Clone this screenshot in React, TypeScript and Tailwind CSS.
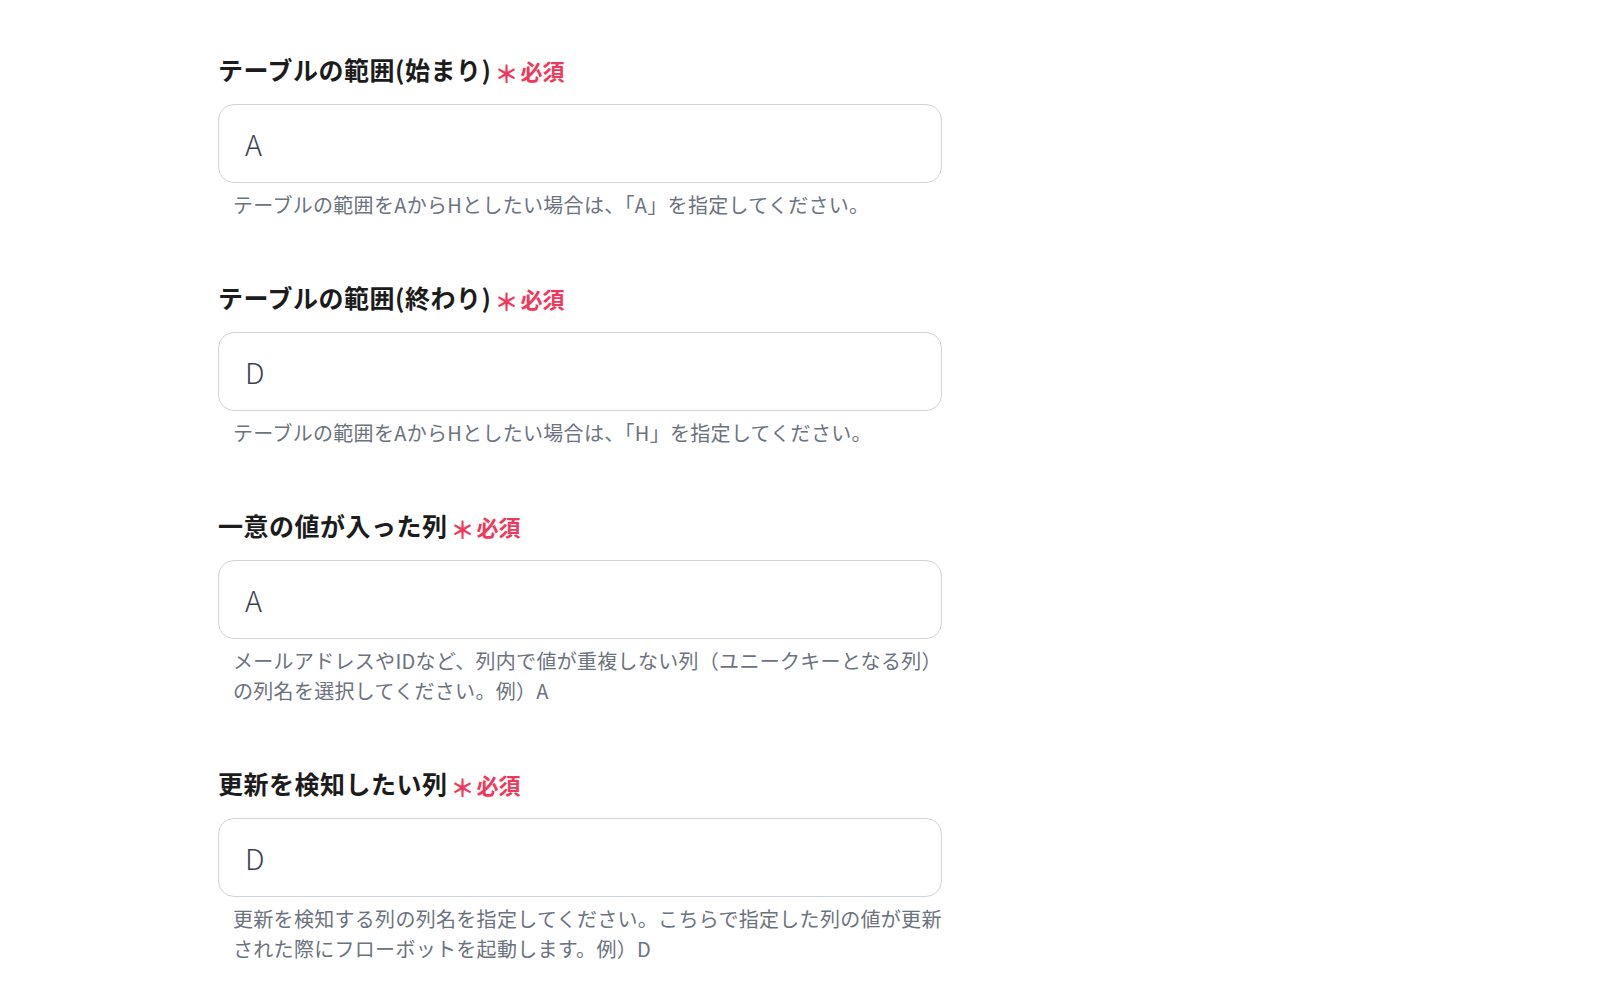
import React from "react";

const JP = { fontFamily: '"Noto Sans CJK JP", "Noto Sans", sans-serif' };

type FieldProps = { label: string; value: string; help: string };

function Field({ label, value, help }: FieldProps) {
  return (
    <div className="flex flex-col">
      <div className="flex items-center h-[36px]">
        <span className="text-[25px] font-bold text-[#1c1c1c] tracking-[0.5px] leading-[36px]">{label}</span>
        <span className="ml-[3px] mt-[8px] text-[24px] font-bold text-[#f2385a] leading-none">＊</span>
        <span className="ml-[2px] mt-[2px] text-[22px] font-bold text-[#f2385a] leading-none">必須</span>
      </div>
      <div className="mt-[17px] h-[79px] w-[724px] rounded-[16px] border border-[#cfd4da] bg-white flex items-center pl-[26px]">
        <span className="text-[29px] font-light text-[#3b4350] leading-none">{value}</span>
      </div>
      <p className="mt-[7px] pl-[15px] w-[734px] text-[20px] leading-[30px] tracking-[0.3px] text-[#6b7280]">{help}</p>
    </div>
  );
}

export default function App() {
  return (
    <div className="w-[1600px] h-[996px] bg-white overflow-hidden" style={JP}>
      <div className="pl-[218px] pt-[51px] flex flex-col gap-[59px]">
        <Field
          label="テーブルの範囲(始まり)"
          value="A"
          help="テーブルの範囲をAからHとしたい場合は、「A」を指定してください。"
        />
        <Field
          label="テーブルの範囲(終わり)"
          value="D"
          help="テーブルの範囲をAからHとしたい場合は、「H」を指定してください。"
        />
        <Field
          label="一意の値が入った列"
          value="A"
          help="メールアドレスやIDなど、列内で値が重複しない列（ユニークキーとなる列）の列名を選択してください。例）A"
        />
        <Field
          label="更新を検知したい列"
          value="D"
          help="更新を検知する列の列名を指定してください。こちらで指定した列の値が更新された際にフローボットを起動します。例）D"
        />
      </div>
    </div>
  );
}
